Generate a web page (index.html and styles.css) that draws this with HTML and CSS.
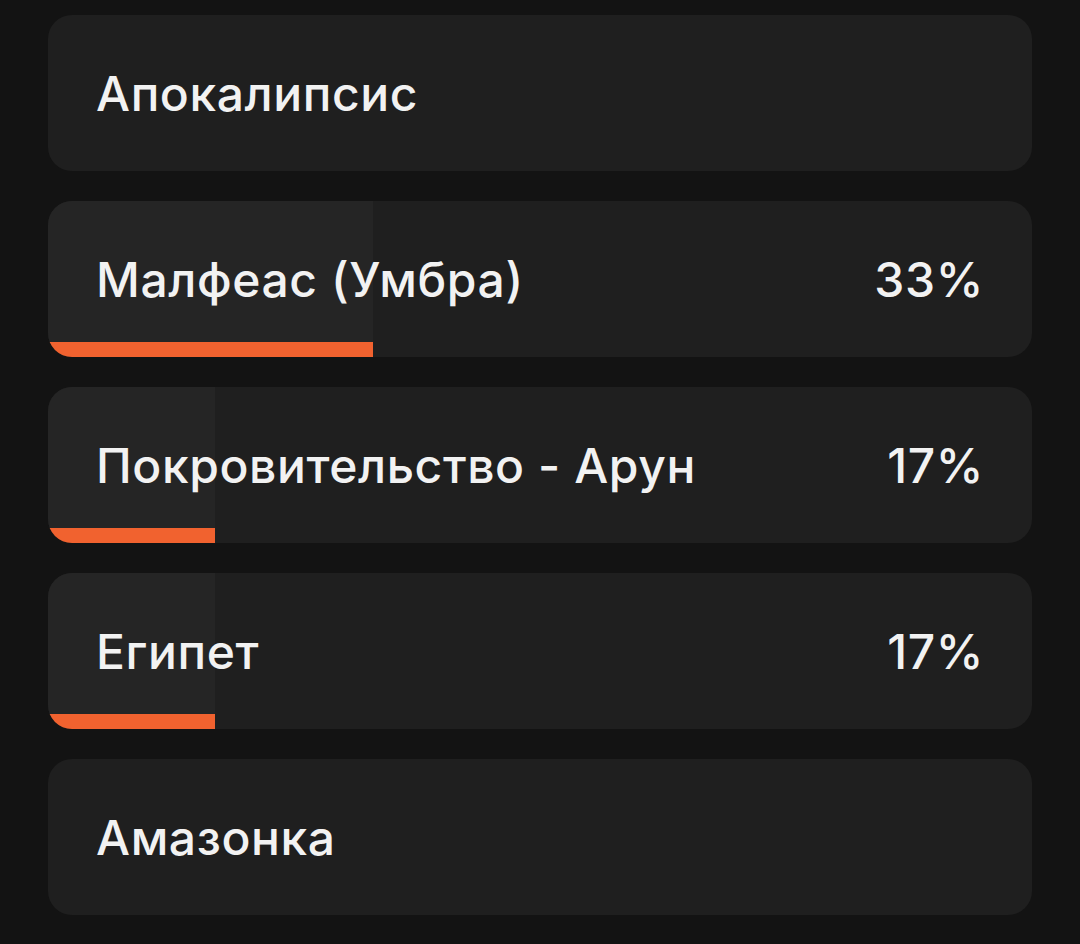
FILE: index.html
```html
<!DOCTYPE html>
<html lang="ru">
<head>
<meta charset="utf-8">
<link rel="stylesheet" href="styles.css">
</head>
<body>
<div class="list">
  <div class="option"><span class="label">Апокалипсис</span></div>
  <div class="option">
    <div class="fill" style="width:33%"></div>
    <span class="label">Малфеас (Умбра)</span><span class="pct">33%</span>
  </div>
  <div class="option">
    <div class="fill" style="width:17%"></div>
    <span class="label">Покровительство - Арун</span><span class="pct">17%</span>
  </div>
  <div class="option">
    <div class="fill" style="width:17%"></div>
    <span class="label">Египет</span><span class="pct">17%</span>
  </div>
  <div class="option"><span class="label">Амазонка</span></div>
</div>
</body>
</html>
```
FILE: styles.css
```css
html, body {
  margin: 0;
  padding: 0;
  background: #131313;
}
body {
  font-family: Inter, "Noto Sans", sans-serif;
  color: #f2f2f2;
}
.list {
  display: flex;
  flex-direction: column;
  gap: 30px;
  padding: 15px 48px 0 48px;
}
.option {
  position: relative;
  height: 156px;
  border-radius: 24px;
  background: #1f1f1f;
  overflow: hidden;
  display: flex;
  align-items: center;
  justify-content: space-between;
  padding: 0 48px 0 48px;
  box-sizing: border-box;
  font-size: 48px;
  font-weight: 500;
  letter-spacing: 0.6px;
}
.fill {
  position: absolute;
  left: 0;
  top: 0;
  bottom: 0;
  background: #252525;
  border-bottom: 15px solid #f1622f;
  box-sizing: border-box;
}
.label, .pct {
  position: relative;
}
```
